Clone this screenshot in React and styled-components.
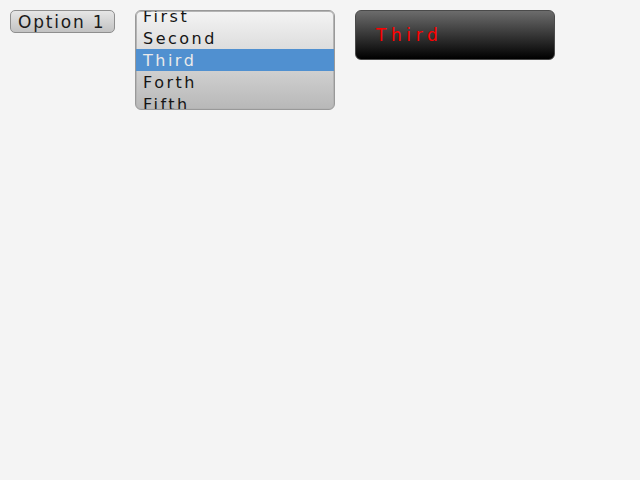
import React from "react";
import styled, { createGlobalStyle } from "styled-components";

const GlobalStyle = createGlobalStyle`
  html, body {
    margin: 0;
    padding: 0;
    background: #f4f4f4;
    font-family: "DejaVu Sans", sans-serif;
  }
`;

const items = ["First", "Second", "Third", "Forth", "Fifth"];

const Page = styled.div`
  display: flex;
  align-items: flex-start;
  gap: 20px;
  padding: 10px;
`;

const OptionButton = styled.button`
  width: 105px;
  height: 23px;
  padding: 0 0 0 7px;
  border: 1px solid #8e8e8e;
  border-radius: 5px;
  background: linear-gradient(#e6e6e6, #c2c2c2);
  color: #1a1a1a;
  font-family: "DejaVu Sans", sans-serif;
  font-size: 17px;
  letter-spacing: 1.8px;
  text-align: left;
  line-height: 23px;
`;

const ListBox = styled.div`
  width: 200px;
  height: 100px;
  box-sizing: border-box;
  border: 1px solid #999999;
  box-shadow: inset 0 0 0 1px #b4b4b4;
  border-radius: 6px;
  background: linear-gradient(#f4f4f4, #b8b8b8);
  overflow: hidden;
`;

const List = styled.ul`
  list-style: none;
  margin: -6px 0 0;
  padding: 0;
`;

const Row = styled.li`
  height: 22px;
  line-height: 24px;
  padding-left: 7px;
  font-size: 16px;
  letter-spacing: 2.5px;
  color: ${(p) => (p.$selected ? "#eaeaea" : "#151515")};
  background: ${(p) => (p.$selected ? "#5090d0" : "transparent")};
`;

const DarkBox = styled.div`
  width: 200px;
  height: 50px;
  box-sizing: border-box;
  border: 1px solid #4a4a4a;
  border-radius: 6px;
  background: linear-gradient(#6c6c6c, #000000);
  display: flex;
  align-items: center;
  padding-left: 20px;
  color: #ff0000;
  font-size: 17px;
  letter-spacing: 4.6px;
`;

export default function App() {
  return (
    <>
      <GlobalStyle />
      <Page>
        <OptionButton>Option 1</OptionButton>
        <ListBox>
          <List>
            {items.map((it) => (
              <Row key={it} $selected={it === "Third"}>
                {it}
              </Row>
            ))}
          </List>
        </ListBox>
        <DarkBox>Third</DarkBox>
      </Page>
    </>
  );
}
